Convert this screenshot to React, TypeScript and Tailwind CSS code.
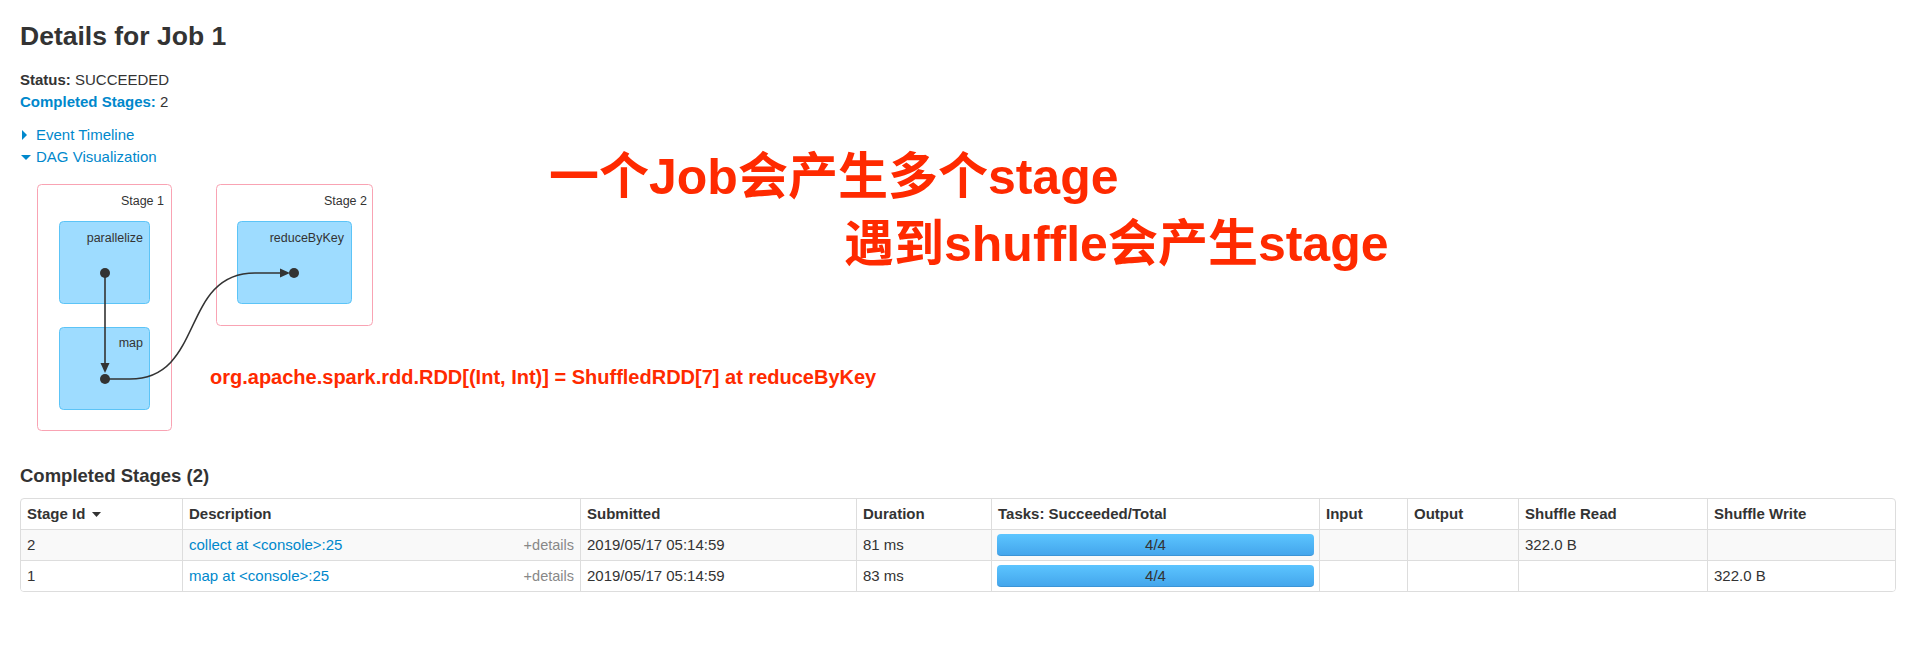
const cols =
  "grid grid-cols-[161px_398px_276px_135px_328px_88px_111px_189px_188px]";

const stages = [
  {
    id: "2",
    desc: "collect at <console>:25",
    submitted: "2019/05/17 05:14:59",
    duration: "81 ms",
    tasks: "4/4",
    read: "322.0 B",
    write: "",
  },
  {
    id: "1",
    desc: "map at <console>:25",
    submitted: "2019/05/17 05:14:59",
    duration: "83 ms",
    tasks: "4/4",
    read: "",
    write: "322.0 B",
  },
];

const headers = [
  "Description",
  "Submitted",
  "Duration",
  "Tasks: Succeeded/Total",
  "Input",
  "Output",
  "Shuffle Read",
  "Shuffle Write",
];

function DagGraph() {
  return (
    <svg
      width="400"
      height="272"
      viewBox="20 168 400 272"
      className="block"
      style={{ fontFamily: '"Liberation Sans", Arial, sans-serif' }}
    >
      <rect x="37.5" y="184.5" width="134" height="246" rx="4" fill="#fff" stroke="#f9a3b3" />
      <rect x="216.5" y="184.5" width="156" height="141" rx="4" fill="#fff" stroke="#f9a3b3" />
      <text x="164" y="205" textAnchor="end" fontSize="12.5" fill="#333">
        Stage 1
      </text>
      <text x="367" y="205" textAnchor="end" fontSize="12.5" fill="#333">
        Stage 2
      </text>

      <rect x="59.5" y="221.5" width="90" height="82" rx="4" fill="#9edcff" stroke="#5cc4f7" />
      <rect x="59.5" y="327.5" width="90" height="82" rx="4" fill="#9edcff" stroke="#5cc4f7" />
      <rect x="237.5" y="221.5" width="114" height="82" rx="4" fill="#9edcff" stroke="#5cc4f7" />
      <text x="143" y="242" textAnchor="end" fontSize="12.5" fill="#333">
        parallelize
      </text>
      <text x="143" y="347" textAnchor="end" fontSize="12.5" fill="#333">
        map
      </text>
      <text x="344" y="242" textAnchor="end" fontSize="12.5" fill="#333">
        reduceByKey
      </text>

      <path d="M105 273 L105 364" stroke="#333" strokeWidth="1.6" fill="none" />
      <polygon points="100.5,363 109.5,363 105,373" fill="#333" />
      <path
        d="M105 379 L130 379 C205 379 180 273 255 273 L281 273"
        stroke="#333"
        strokeWidth="1.6"
        fill="none"
      />
      <polygon points="280,268.5 280,277.5 290,273" fill="#333" />
      <circle cx="105" cy="273" r="5" fill="#333" />
      <circle cx="105" cy="379" r="5" fill="#333" />
      <circle cx="294" cy="273" r="5" fill="#333" />
    </svg>
  );
}

function StagesTable() {
  return (
    <div className="mt-[10px] w-[1876px] overflow-hidden rounded-[4px] border border-[#dddddd] text-[15px] text-[#333]">
      <div className={`${cols} h-[30px] font-bold leading-[30px]`}>
        <div className="flex items-center pl-[6px]">
          Stage Id
          <svg width="9" height="5" viewBox="0 0 9 5" className="ml-[7px]">
            <polygon points="0,0 9,0 4.5,5" fill="#333" />
          </svg>
        </div>
        {headers.map((h) => (
          <div key={h} className="border-l border-[#dddddd] pl-[6px]">
            {h}
          </div>
        ))}
      </div>
      {stages.map((s, i) => (
        <div
          key={s.id}
          className={`${cols} h-[31px] border-t border-[#dddddd] leading-[30px] ${
            i === 0 ? "bg-[#f9f9f9]" : "bg-white"
          }`}
        >
          <div className="pl-[6px]">{s.id}</div>
          <div className="flex justify-between border-l border-[#dddddd] pl-[6px] pr-[6px]">
            <span className="text-[#0088cc]">{s.desc}</span>
            <span className="text-[14.5px] text-[#888]">+details</span>
          </div>
          <div className="border-l border-[#dddddd] pl-[6px]">{s.submitted}</div>
          <div className="border-l border-[#dddddd] pl-[6px]">{s.duration}</div>
          <div className="flex items-center border-l border-[#dddddd] px-[5px]">
            <div className="flex h-[22px] w-full items-center justify-center rounded-[4px] border-b border-[#3b94d6] bg-gradient-to-b from-[#5cc5ff] to-[#44a6ec] leading-[22px] text-[#333]">
              {s.tasks}
            </div>
          </div>
          <div className="border-l border-[#dddddd]" />
          <div className="border-l border-[#dddddd]" />
          <div className="border-l border-[#dddddd] pl-[6px]">{s.read}</div>
          <div className="border-l border-[#dddddd] pl-[6px]">{s.write}</div>
        </div>
      ))}
    </div>
  );
}

export default function App() {
  return (
    <div
      className="relative h-[666px] w-[1918px] overflow-hidden bg-white px-[20px] pt-[20px] text-[#333]"
      style={{ fontFamily: '"Liberation Sans", Arial, "Noto Sans CJK SC", sans-serif' }}
    >
      <h1 className="text-[26.5px] font-bold leading-[32px]">Details for Job 1</h1>

      <div className="mt-[17px] text-[15px] leading-[22px]">
        <div>
          <span className="font-bold">Status:</span> SUCCEEDED
        </div>
        <div>
          <span className="font-bold text-[#0088cc]">Completed Stages:</span> 2
        </div>
      </div>

      <div className="mt-[11px] text-[15px] leading-[22px] text-[#0088cc]">
        <div className="flex items-center">
          <span className="ml-[2px] h-0 w-0 border-y-[5px] border-l-[5px] border-y-transparent border-l-[#0088cc]" />
          <span className="ml-[9px]">Event Timeline</span>
        </div>
        <div className="flex items-center">
          <span className="ml-[1px] h-0 w-0 border-x-[5px] border-t-[5px] border-x-transparent border-t-[#0088cc]" />
          <span className="ml-[5px]">DAG Visualization</span>
        </div>
      </div>

      <DagGraph />

      <h4 className="mt-[24px] text-[18.5px] font-bold leading-[24px]">Completed Stages (2)</h4>
      <StagesTable />

      <div className="absolute left-[549px] top-[152px] whitespace-nowrap text-[50px] font-bold leading-[50px] text-[#ff2a00]">
        一个Job会产生多个stage
      </div>
      <div className="absolute left-[844px] top-[219px] whitespace-nowrap text-[50px] font-bold leading-[50px] text-[#ff2a00]">
        遇到shuffle会产生stage
      </div>
      <div className="absolute left-[210px] top-[367px] whitespace-nowrap text-[20px] font-bold leading-[20px] text-[#ff2a00]">
        org.apache.spark.rdd.RDD[(Int, Int)] = ShuffledRDD[7] at reduceByKey
      </div>
    </div>
  );
}
